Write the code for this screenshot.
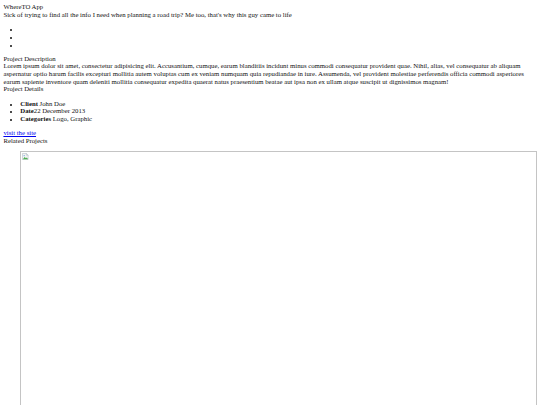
const details = [
  { label: 'Client', value: ' John Doe' },
  { label: 'Date', value: '22 December 2013' },
  { label: 'Categories', value: ' Logo, Graphic' },
];

function BrokenImage() {
  return (
    <svg width="7" height="7" viewBox="0 0 16 16" className="block">
      <path d="M1 1h9l4 4v10H1z" fill="#f4f4f4" stroke="#9aa6b0" strokeWidth="1" />
      <path d="M10 1v4h4" fill="none" stroke="#9aa6b0" strokeWidth="1" />
      <path d="M2 14l4-5 3 3 2-2 3 4z" fill="#4caf50" />
      <circle cx="5" cy="6" r="1.5" fill="#6fa8dc" />
    </svg>
  );
}

export default function App() {
  return (
    <div className="m-[3.4px] font-['Liberation_Serif',serif] text-[6.75px] leading-[7.6px] text-[#111]">
      <div>WhereTO App</div>
      <div>Sick of trying to find all the info I need when planning a road trip? Me too, that's why this guy came to life</div>

      <ul className="my-[6.75px] pl-[16.9px] list-disc marker:text-[5.5px]">
        <li className="h-[7.6px]"></li>
        <li className="h-[7.6px]"></li>
        <li className="h-[7.6px]"></li>
      </ul>

      <div>Project Description</div>
      <div>
        Lorem ipsum dolor sit amet, consectetur adipisicing elit. Accusantium, cumque, earum blanditiis incidunt minus commodi consequatur provident quae. Nihil, alias, vel consequatur ab aliquam aspernatur optio harum facilis excepturi mollitia autem voluptas cum ex veniam numquam quia repudiandae in iure. Assumenda, vel provident molestiae perferendis officia commodi asperiores earum sapiente inventore quam deleniti mollitia consequatur expedita quaerat natus praesentium beatae aut ipsa non ex ullam atque suscipit ut dignissimos magnam!
      </div>
      <div>Project Details</div>

      <ul className="my-[6.75px] pl-[16.9px] list-disc marker:text-[5.5px]">
        {details.map(d => (
          <li key={d.label}>
            <b>{d.label}</b>{d.value}
          </li>
        ))}
      </ul>

      <a href="#" className="text-[#0000ee] underline">visit the site</a>
      <div>Related Projects</div>

      <ul className="my-[6.75px] pl-[16.9px] list-none">
        <li>
          <div className="h-[400px] border border-[#c4c4c4] p-[1px]">
            <BrokenImage />
          </div>
        </li>
      </ul>
    </div>
  );
}
